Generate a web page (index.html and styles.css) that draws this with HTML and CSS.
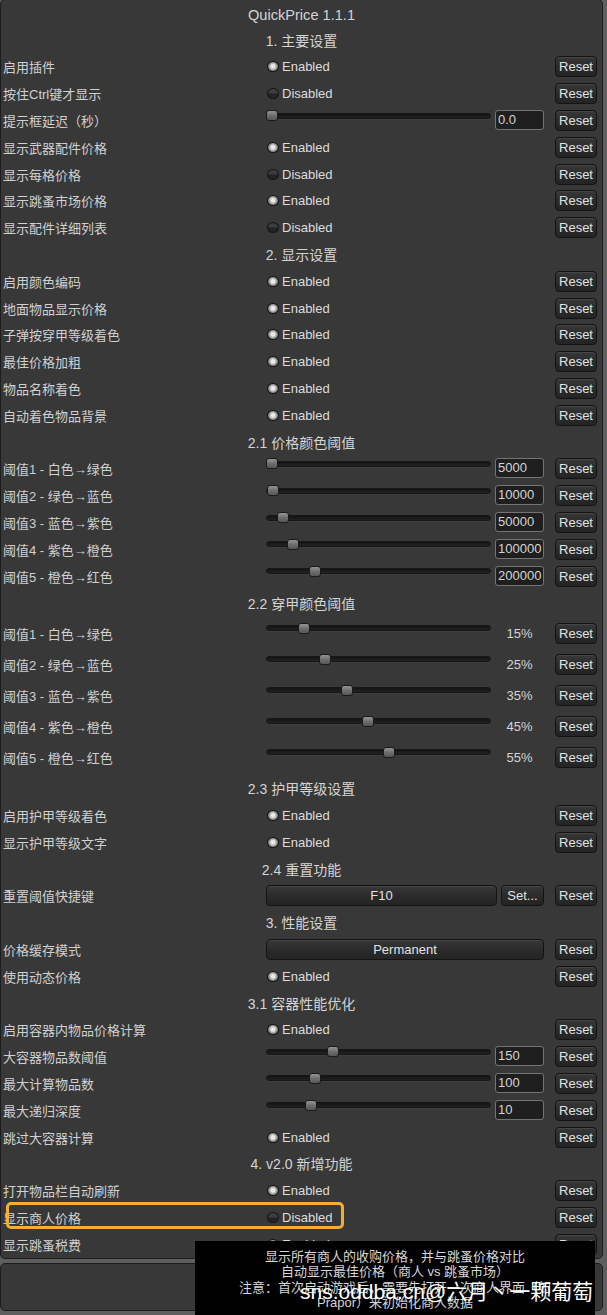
FILE: index.html
```html
<!DOCTYPE html>
<html lang="zh">
<head>
<meta charset="utf-8">
<title>QuickPrice</title>
<link rel="stylesheet" href="styles.css">
</head>
<body>
<div class="window">
  <div class="panel main">
    <div class="title">QuickPrice 1.1.1</div>

    <div class="section">1. 主要设置</div>
    <div class="row"><span class="label">启用插件</span><div class="ctrl"><span class="toggle on"></span><span class="tlabel">Enabled</span></div><span class="btn reset">Reset</span></div>
    <div class="row"><span class="label">按住Ctrl键才显示</span><div class="ctrl"><span class="toggle"></span><span class="tlabel">Disabled</span></div><span class="btn reset">Reset</span></div>
    <div class="row"><span class="label">提示框延迟（秒）</span><div class="ctrl"><div class="slider"><div class="track"></div><div class="thumb" style="left:0px"></div></div><span class="field">0.0</span></div><span class="btn reset">Reset</span></div>
    <div class="row"><span class="label">显示武器配件价格</span><div class="ctrl"><span class="toggle on"></span><span class="tlabel">Enabled</span></div><span class="btn reset">Reset</span></div>
    <div class="row"><span class="label">显示每格价格</span><div class="ctrl"><span class="toggle"></span><span class="tlabel">Disabled</span></div><span class="btn reset">Reset</span></div>
    <div class="row"><span class="label">显示跳蚤市场价格</span><div class="ctrl"><span class="toggle on"></span><span class="tlabel">Enabled</span></div><span class="btn reset">Reset</span></div>
    <div class="row"><span class="label">显示配件详细列表</span><div class="ctrl"><span class="toggle"></span><span class="tlabel">Disabled</span></div><span class="btn reset">Reset</span></div>

    <div class="section">2. 显示设置</div>
    <div class="row"><span class="label">启用颜色编码</span><div class="ctrl"><span class="toggle on"></span><span class="tlabel">Enabled</span></div><span class="btn reset">Reset</span></div>
    <div class="row"><span class="label">地面物品显示价格</span><div class="ctrl"><span class="toggle on"></span><span class="tlabel">Enabled</span></div><span class="btn reset">Reset</span></div>
    <div class="row"><span class="label">子弹按穿甲等级着色</span><div class="ctrl"><span class="toggle on"></span><span class="tlabel">Enabled</span></div><span class="btn reset">Reset</span></div>
    <div class="row"><span class="label">最佳价格加粗</span><div class="ctrl"><span class="toggle on"></span><span class="tlabel">Enabled</span></div><span class="btn reset">Reset</span></div>
    <div class="row"><span class="label">物品名称着色</span><div class="ctrl"><span class="toggle on"></span><span class="tlabel">Enabled</span></div><span class="btn reset">Reset</span></div>
    <div class="row"><span class="label">自动着色物品背景</span><div class="ctrl"><span class="toggle on"></span><span class="tlabel">Enabled</span></div><span class="btn reset">Reset</span></div>

    <div class="section">2.1 价格颜色阈值</div>
    <div class="row"><span class="label">阈值1 - 白色→绿色</span><div class="ctrl"><div class="slider"><div class="track"></div><div class="thumb" style="left:0px"></div></div><span class="field">5000</span></div><span class="btn reset">Reset</span></div>
    <div class="row"><span class="label">阈值2 - 绿色→蓝色</span><div class="ctrl"><div class="slider"><div class="track"></div><div class="thumb" style="left:1px"></div></div><span class="field">10000</span></div><span class="btn reset">Reset</span></div>
    <div class="row"><span class="label">阈值3 - 蓝色→紫色</span><div class="ctrl"><div class="slider"><div class="track"></div><div class="thumb" style="left:11px"></div></div><span class="field">50000</span></div><span class="btn reset">Reset</span></div>
    <div class="row"><span class="label">阈值4 - 紫色→橙色</span><div class="ctrl"><div class="slider"><div class="track"></div><div class="thumb" style="left:21px"></div></div><span class="field">100000</span></div><span class="btn reset">Reset</span></div>
    <div class="row"><span class="label">阈值5 - 橙色→红色</span><div class="ctrl"><div class="slider"><div class="track"></div><div class="thumb" style="left:43px"></div></div><span class="field">200000</span></div><span class="btn reset">Reset</span></div>

    <div class="section">2.2 穿甲颜色阈值</div>
    <div class="group-tall">
      <div class="row tall"><span class="label">阈值1 - 白色→绿色</span><div class="ctrl"><div class="slider"><div class="track"></div><div class="thumb" style="left:32px"></div></div><span class="value">15%</span></div><span class="btn reset">Reset</span></div>
      <div class="row tall"><span class="label">阈值2 - 绿色→蓝色</span><div class="ctrl"><div class="slider"><div class="track"></div><div class="thumb" style="left:53px"></div></div><span class="value">25%</span></div><span class="btn reset">Reset</span></div>
      <div class="row tall"><span class="label">阈值3 - 蓝色→紫色</span><div class="ctrl"><div class="slider"><div class="track"></div><div class="thumb" style="left:75px"></div></div><span class="value">35%</span></div><span class="btn reset">Reset</span></div>
      <div class="row tall"><span class="label">阈值4 - 紫色→橙色</span><div class="ctrl"><div class="slider"><div class="track"></div><div class="thumb" style="left:96px"></div></div><span class="value">45%</span></div><span class="btn reset">Reset</span></div>
      <div class="row tall"><span class="label">阈值5 - 橙色→红色</span><div class="ctrl"><div class="slider"><div class="track"></div><div class="thumb" style="left:117px"></div></div><span class="value">55%</span></div><span class="btn reset">Reset</span></div>
    </div>

    <div class="section">2.3 护甲等级设置</div>
    <div class="row"><span class="label">启用护甲等级着色</span><div class="ctrl"><span class="toggle on"></span><span class="tlabel">Enabled</span></div><span class="btn reset">Reset</span></div>
    <div class="row"><span class="label">显示护甲等级文字</span><div class="ctrl"><span class="toggle on"></span><span class="tlabel">Enabled</span></div><span class="btn reset">Reset</span></div>

    <div class="section">2.4 重置功能</div>
    <div class="row"><span class="label">重置阈值快捷键</span><div class="ctrl"><span class="btn wide">F10</span><span class="btn set">Set...</span></div><span class="btn reset">Reset</span></div>

    <div class="section">3. 性能设置</div>
    <div class="row"><span class="label">价格缓存模式</span><div class="ctrl"><span class="btn wide">Permanent</span></div><span class="btn reset">Reset</span></div>
    <div class="row"><span class="label">使用动态价格</span><div class="ctrl"><span class="toggle on"></span><span class="tlabel">Enabled</span></div><span class="btn reset">Reset</span></div>

    <div class="section">3.1 容器性能优化</div>
    <div class="row"><span class="label">启用容器内物品价格计算</span><div class="ctrl"><span class="toggle on"></span><span class="tlabel">Enabled</span></div><span class="btn reset">Reset</span></div>
    <div class="row"><span class="label">大容器物品数阈值</span><div class="ctrl"><div class="slider"><div class="track"></div><div class="thumb" style="left:61px"></div></div><span class="field">150</span></div><span class="btn reset">Reset</span></div>
    <div class="row"><span class="label">最大计算物品数</span><div class="ctrl"><div class="slider"><div class="track"></div><div class="thumb" style="left:43px"></div></div><span class="field">100</span></div><span class="btn reset">Reset</span></div>
    <div class="row"><span class="label">最大递归深度</span><div class="ctrl"><div class="slider"><div class="track"></div><div class="thumb" style="left:39px"></div></div><span class="field">10</span></div><span class="btn reset">Reset</span></div>
    <div class="row"><span class="label">跳过大容器计算</span><div class="ctrl"><span class="toggle on"></span><span class="tlabel">Enabled</span></div><span class="btn reset">Reset</span></div>

    <div class="section">4. v2.0 新增功能</div>
    <div class="row"><span class="label">打开物品栏自动刷新</span><div class="ctrl"><span class="toggle on"></span><span class="tlabel">Enabled</span></div><span class="btn reset">Reset</span></div>
    <div class="row"><span class="label">显示商人价格</span><div class="ctrl"><span class="toggle"></span><span class="tlabel">Disabled</span></div><span class="btn reset">Reset</span></div>
    <div class="row"><span class="label">显示跳蚤税费</span><div class="ctrl"><span class="toggle on"></span><span class="tlabel">Enabled</span></div><span class="btn reset">Reset</span></div>
  </div>

  <div class="panel foot"></div>

  <div class="highlight"></div>

  <div class="tooltip">显示所有商人的收购价格，并与跳蚤价格对比<br>自动显示最佳价格（商人 vs 跳蚤市场）<br>注意：首次启动游戏后，需要先打开一次商人界面（如<br>Prapor）来初始化商人数据</div>

  <div class="watermark">sns.oddba.cn@六月丶一颗葡萄</div>
</div>
</body>
</html>
```

FILE: styles.css
```css
* { box-sizing: border-box; }

html, body {
  margin: 0;
  padding: 0;
}

body {
  background: #5e5e5e;
  font-family: "Liberation Sans", "Noto Sans CJK SC", sans-serif;
  font-size: 13px;
  color: #d2d2d2;
  width: 607px;
  height: 1315px;
  overflow: hidden;
}

.window {
  position: relative;
  width: 607px;
  height: 1315px;
}

.panel {
  width: 603px;
  background: #383838;
  border: 1px solid #1d1d1d;
  border-radius: 5px;
}

.main {
  margin-top: -1px;
  padding-bottom: 0;
}

.foot {
  margin-top: 4px;
  height: 48px;
}

.title {
  height: 26.8px;
  padding-top: 2px;
  text-align: center;
  font-size: 14.6px;
  line-height: 26px;
  color: #d4d4d4;
}

.section {
  height: 26.8px;
  text-align: center;
  font-size: 14px;
  line-height: 28px;
  color: #d4d4d4;
}

.row {
  display: flex;
  align-items: center;
  height: 26.8px;
  padding-right: 5px;
}

.row.tall {
  height: 31px;
}

.group-tall {
  margin-top: 1.5px;
  margin-bottom: 2.5px;
}

.label {
  width: 265px;
  padding-left: 2px;
  white-space: nowrap;
  color: #d0d0d0;
  flex: none;
}

.ctrl {
  flex: 1;
  display: flex;
  align-items: center;
  height: 21px;
}

.toggle {
  width: 12px;
  height: 11px;
  border-radius: 50%;
  border: 1px solid #141414;
  background: linear-gradient(#3d3d3d 0, #3d3d3d 45%, #222 55%, #262626 100%);
  margin-left: 1px;
  flex: none;
}

.toggle.on {
  background: radial-gradient(circle at 50% 48%, #f0f0f0 0, #e4e4e4 2px, #b4b4b4 3px, #8c8c8c 4.2px, #5c5c5c 100%);
}

.tlabel {
  margin-left: 3px;
  color: #dcdcdc;
}

.slider {
  position: relative;
  flex: 1;
  align-self: flex-start;
  height: 21px;
}

.track {
  margin-top: 2.5px;
  height: 6px;
  border-radius: 3px;
  background: linear-gradient(#141414, #222);
  border: 1px solid #161616;
  box-shadow: 0 1px 0 rgba(255, 255, 255, 0.04);
}

.thumb {
  position: absolute;
  top: 0;
  width: 12px;
  height: 11px;
  border-radius: 3px;
  border: 1px solid #1a1a1a;
  background: linear-gradient(#949494, #6e6e6e 50%, #565656 100%);
}

.field {
  width: 49px;
  height: 20px;
  margin-left: 4px;
  margin-top: -1px;
  padding-left: 2px;
  line-height: 18px;
  border: 1px solid #747474;
  border-radius: 3px;
  background: #1f1f1f;
  color: #d4d4d4;
  white-space: nowrap;
  overflow: hidden;
  flex: none;
}

.value {
  width: 49px;
  margin-left: 4px;
  text-align: center;
  color: #d4d4d4;
  flex: none;
}

.btn {
  display: flex;
  align-items: center;
  justify-content: center;
  height: 21px;
  border: 1px solid #131313;
  border-radius: 4px;
  background: linear-gradient(#383838, #2b2b2b 50%, #242424 100%);
  box-shadow: inset 0 1px 0 rgba(255, 255, 255, 0.08);
  color: #e2e2e2;
  white-space: nowrap;
}

.reset {
  width: 42px;
  margin-left: 11px;
  flex: none;
}

.wide {
  flex: 1;
}

.set {
  width: 43px;
  margin-left: 4px;
  flex: none;
}

.highlight {
  position: absolute;
  left: 6px;
  top: 1203px;
  width: 338px;
  height: 27px;
  border: 3px solid #f4b02c;
  border-radius: 5px;
}

.tooltip {
  position: absolute;
  left: 195px;
  top: 1242px;
  width: 400px;
  height: 80px;
  padding-top: 8px;
  background: #000;
  color: #d6d6d6;
  text-align: center;
  font-size: 13px;
  line-height: 15.4px;
}

.watermark {
  position: absolute;
  left: 300px;
  top: 1281px;
  font-size: 21px;
  line-height: 24px;
  color: #ffffff;
  white-space: nowrap;
}
```
